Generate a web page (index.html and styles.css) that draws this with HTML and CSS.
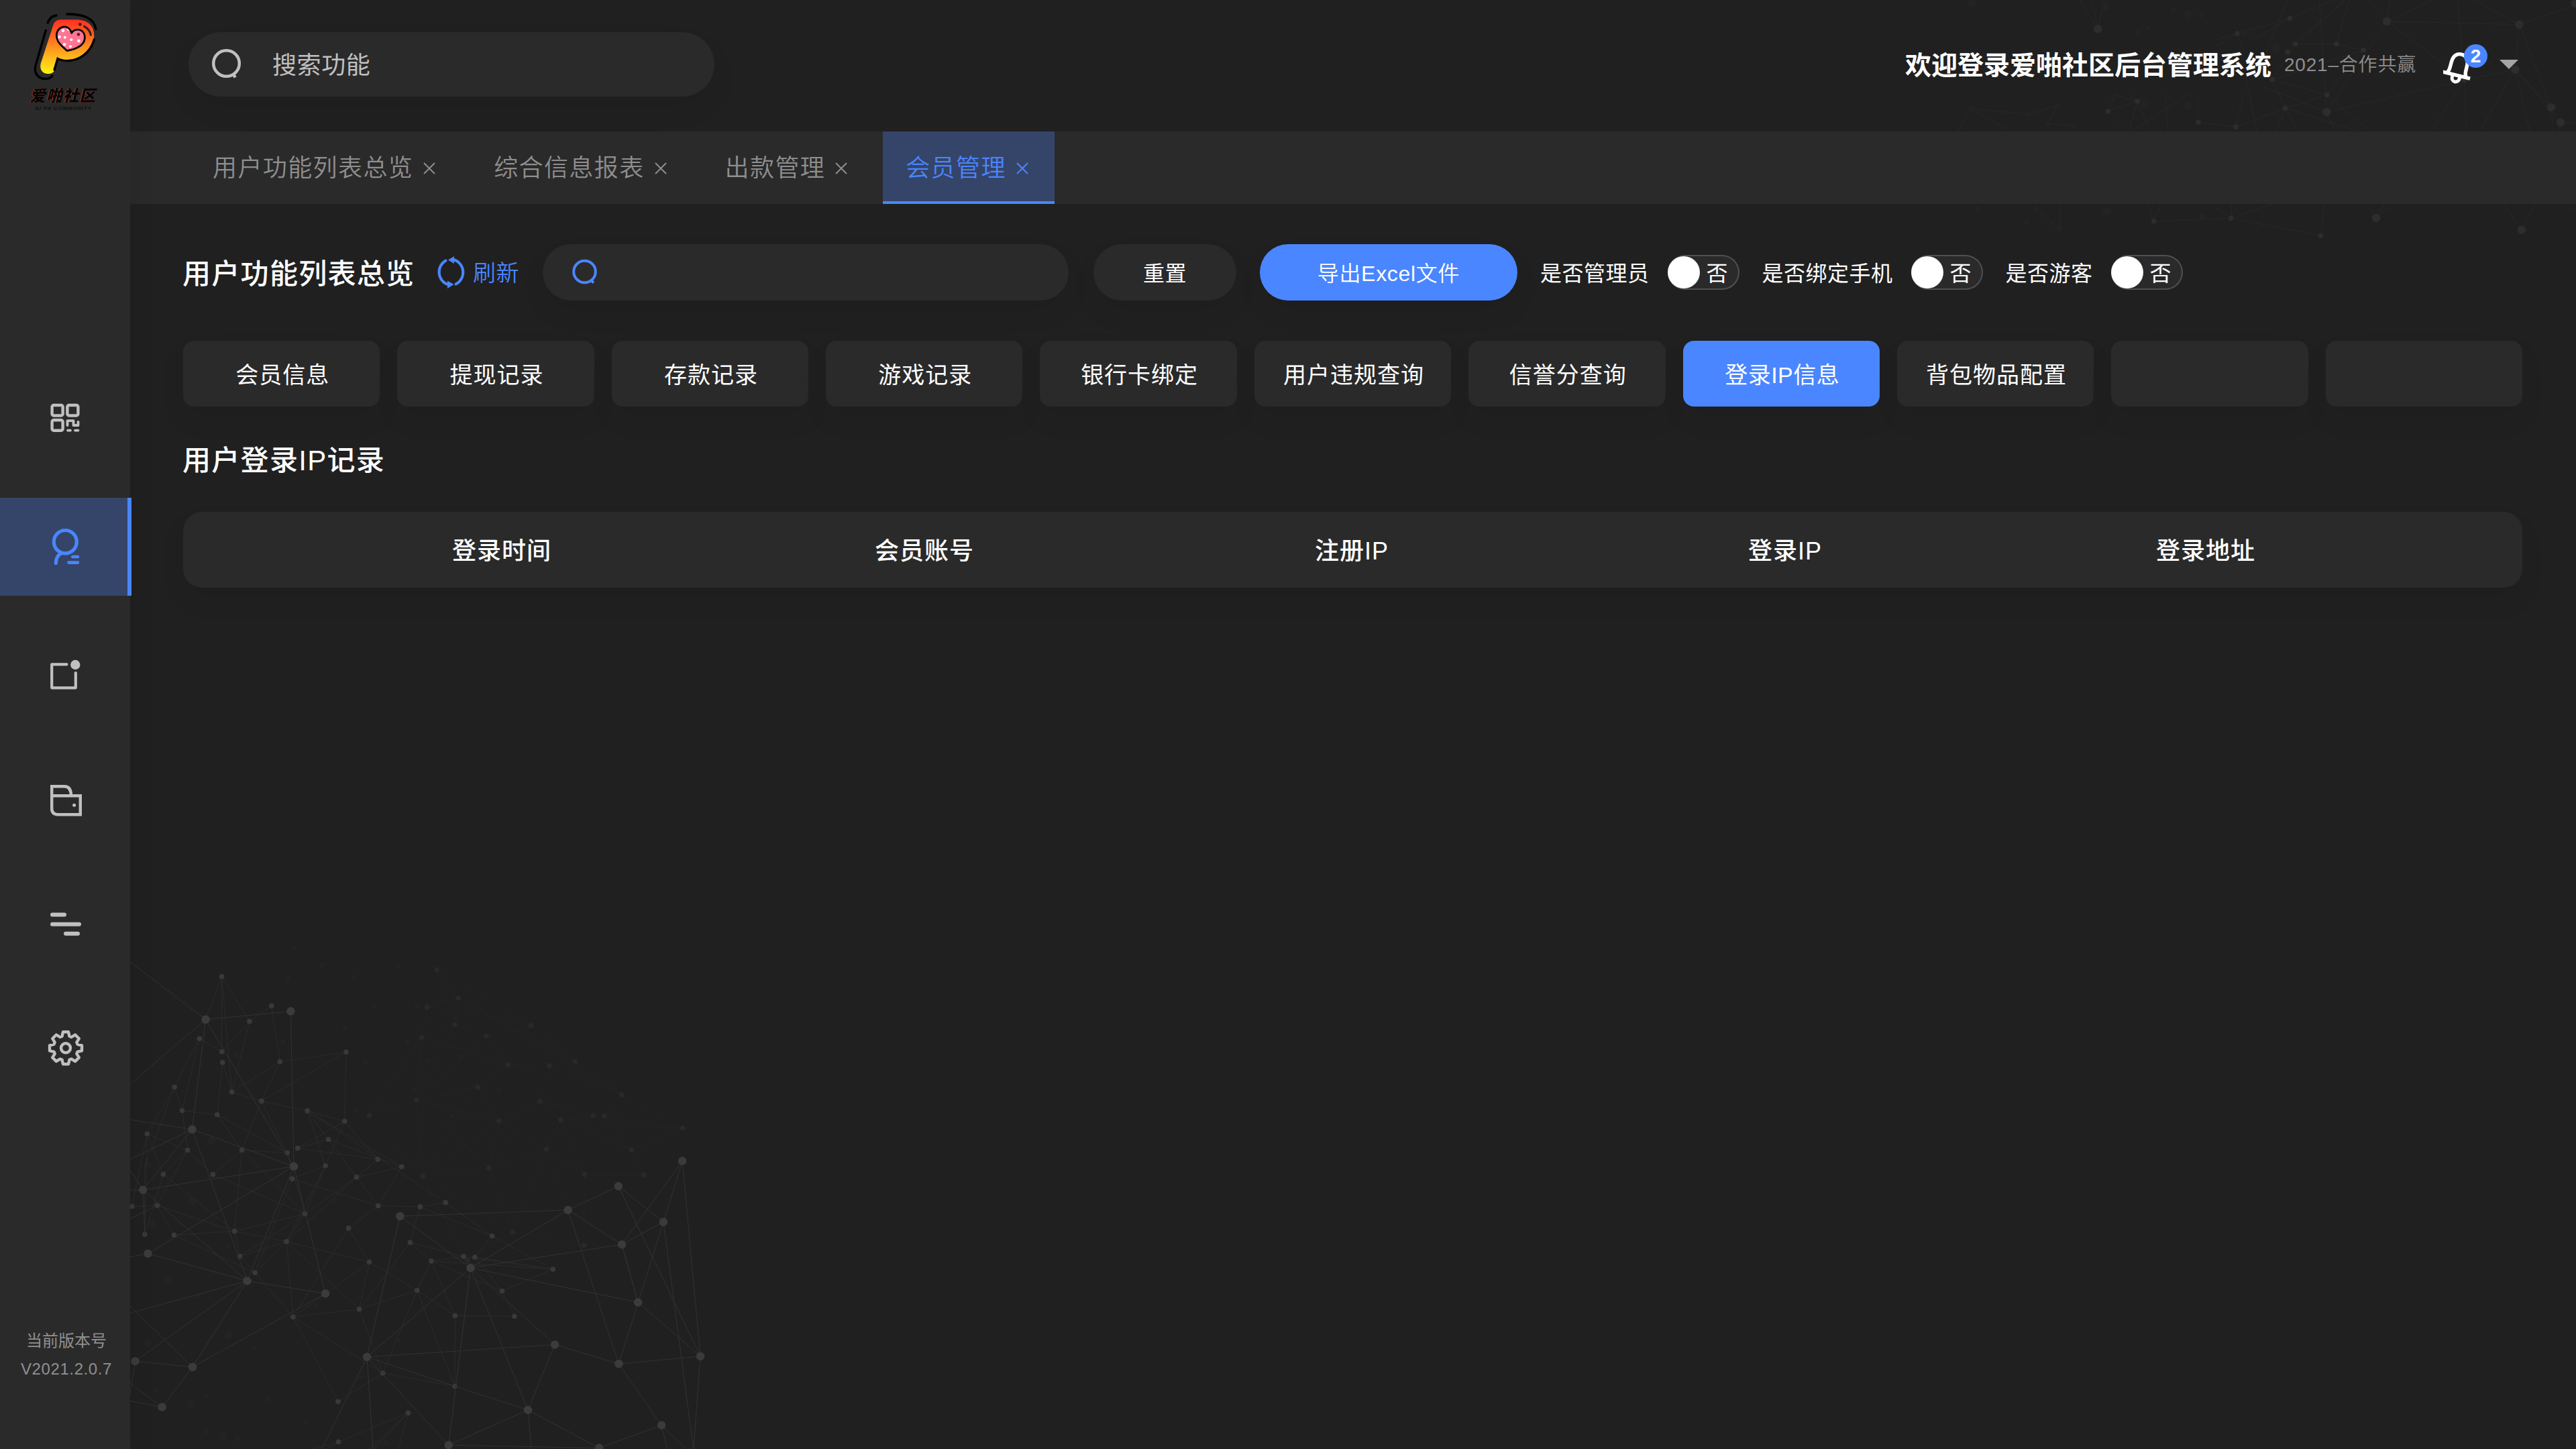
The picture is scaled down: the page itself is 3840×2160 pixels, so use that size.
FILE: index.html
```html
<!DOCTYPE html>
<html lang="zh-CN">
<head>
<meta charset="utf-8">
<title>爱啪社区后台管理系统</title>
<link rel="stylesheet" href="styles.css">
</head>
<body>
<div class="app">
  <svg class="mesh mesh-bottom" viewBox="0 0 1568 1568" preserveAspectRatio="none">
    <g class="mesh-faint">
      <path class="link" d="M803 94L859 181L778 209L764 302L850 263L859 181L850 263L803 94L1048 265L778 209M859 181L1162 376L1048 265L932 298L850 263M1048 265L988 386L932 298L750 495L850 263M764 302L988 386L1096 389L1162 376L1284 479L1096 389L1071 499L965 559L750 495L764 302L628 542L750 495L910 455L988 386M910 455L965 559L939 704L750 495L767 729L628 542M910 455L767 729L965 559L1088 646L1125 556L1071 499L1209 542L1442 581L1125 556L1238 544L1284 479L1442 581L1309 648L1125 556L1187 724L1341 725L1309 648L1238 544M1071 499L939 704L767 729L1000 901L939 704L1088 646L1187 724L1186 942L1000 901L1088 646L1144 833M767 729L880 990L1000 901M859 181L1284 479"/>
      <path class="dot small" d="M803 94h.1M859 181h.1M778 209h.1M850 263h.1M764 302h.1M932 298h.1M1048 265h.1M988 386h.1M1096 389h.1M1162 376h.1M910 455h.1M750 495h.1M628 542h.1M1071 499h.1M1284 479h.1M965 559h.1M1125 556h.1M1209 542h.1M1238 544h.1M1442 581h.1M1088 646h.1M1309 648h.1M939 704h.1M767 729h.1M1187 724h.1M1341 725h.1M1000 901h.1M1186 942h.1M883 988h.1"/>
    </g>
    <g class="mesh-ghost">
      <path class="dot large" d="M219 620h.1M53 695h.1M168 805h.1M62 874h.1M104 1052h.1M263 1218h.1M53 1241h.1M164 1430h.1M249 1530h.1"/>
      <path class="dot small" d="M434 28h.1M505 80h.1M703 84h.1M587 116h.1M418 122h.1M642 205h.1M752 206h.1M565 274h.1M404 315h.1M726 318h.1M284 358h.1M618 378h.1M781 375h.1M866 360h.1M594 523h.1M743 466h.1M965 466h.1M842 544h.1M538 806h.1M260 942h.1M182 1097h.1M488 1130h.1M328 1258h.1M73 1386h.1M206 1403h.1M364 1415h.1M462 1484h.1M605 1348h.1M207 1515h.1M285 1537h.1M671 1549h.1M705 1234h.1"/>
    </g>
    <g class="mesh-mid">
      <path class="link" d="M245 115L203 247M245 115L317 253L245 346L187 306L122 455L142 527L187 306M245 115L245 346M245 115L271 470L317 253L374 205L396 377L568 347L564 560L442 643L522 616L467 528L564 560L650 677L442 643M247 379L271 470L396 377L348 498L568 347M247 379L233 540L142 527L156 649L51 599L93 723L156 649L222 724L297 649L233 540L415 657L348 498L271 470M348 498L467 528L712 700L522 616L595 732L650 677M348 498L297 649L415 657M467 528L514 697L564 560M467 528L826 810L760 823L651 820L712 700L595 732L461 845L514 697L428 737L651 820L595 732L413 930L461 845L222 724M514 697L413 930L278 898L297 649L461 845L278 898L121 910L77 819L278 898L93 723L45 908L51 599L12 822L77 819L156 649M122 455L45 700L45 908M122 455L51 599M12 822L77 819M121 910L331 1026L292 975L461 845M292 975L413 930L331 1026L430 1162L413 930L628 993L574 889L651 820M574 889L430 1162L602 1138L413 930M628 993L430 1162M628 993L602 1138L752 1080L628 993M602 1138L734 933L760 823L947 913L826 810M734 933L873 976L789 990L734 933M789 990L752 1080L851 1158L1005 1160L973 1082L902 978L947 913L1105 1015L902 978M873 976L1105 1015L973 1082L789 990L851 1158L850 1375L663 1335L752 1080L850 1375M789 990L1105 1015M602 1138L663 1335L430 1162L547 1422L663 1335M415 657L461 845M428 737L331 1026M278 898L292 975M548 1546L729 1457L640 1568M729 1457L703 1568M548 1546L480 1568M548 1546L520 1568M729 1457L628 1568"/>
      <path class="dot small" d="M245 115h.1M374 205h.1M317 253h.1M187 306h.1M245 346h.1M247 379h.1M396 377h.1M568 347h.1M122 455h.1M271 470h.1M348 498h.1M467 528h.1M142 527h.1M233 540h.1M564 560h.1M51 599h.1M156 649h.1M297 649h.1M415 657h.1M442 643h.1M522 616h.1M650 677h.1M514 697h.1M712 700h.1M595 732h.1M428 737h.1M222 724h.1M93 723h.1M12 822h.1M77 819h.1M461 845h.1M651 820h.1M760 823h.1M826 810h.1M278 898h.1M574 889h.1M45 908h.1M121 910h.1M413 930h.1M292 975h.1M331 1026h.1M628 993h.1M734 933h.1M789 990h.1M873 976h.1M902 978h.1M947 913h.1M1105 1015h.1M973 1082h.1M752 1080h.1M602 1138h.1M430 1162h.1M851 1158h.1M1005 1160h.1M663 1335h.1M850 1375h.1M547 1422h.1M729 1457h.1M548 1546h.1"/>
    </g>
    <g class="mesh-strong">
      <path class="link" d="M7 70L203 247L424 222L432 699L40 771L7 710M203 247L7 446M203 247L168 585L7 555M203 247L432 699L168 585L7 677M168 585L40 771L311 1051L168 585M432 699L53 967L7 977M432 699L514 1090L311 1051L53 967M432 699L311 1051L7 1150M40 771L7 771M40 771L45 908M311 1051L20 1298L169 1316L311 1051M514 1090L169 1316L90 1439L7 1420M169 1316L7 1128M20 1298L7 1400M90 1439L7 1365M7 860L77 819M708 852L1144 833L1275 760L1392 870L1284 939L1144 833L891 1011L708 852L622 1285L891 1011L1284 939L1326 1117L891 1011L1110 1247L622 1285L850 1375L1040 1448L891 1011L834 1556L622 1285L505 1568M622 1285L638 1568M1441 682L1284 939M1441 682L1392 870L1276 1306L1144 833M1441 682L1488 1283L1326 1117M1284 939L1326 1117M1392 870L1470 1568L1488 1283L1276 1306L1110 1247L1040 1448L834 1556L1225 1565L1040 1448L1049 1568M1275 760L1488 1283M1276 1306L1387 1495L1225 1565M1387 1495L1402 1568M1387 1495L1450 1568"/>
      <path class="dot large" d="M424 222h.1M203 247h.1M168 585h.1M40 771h.1M432 699h.1M53 967h.1M311 1051h.1M514 1090h.1M20 1298h.1M169 1316h.1M90 1439h.1M708 852h.1M891 1011h.1M622 1285h.1M1144 833h.1M1275 760h.1M1441 682h.1M1392 870h.1M1284 939h.1M1326 1117h.1M1110 1247h.1M1276 1306h.1M1488 1283h.1M1040 1448h.1M834 1556h.1M1225 1565h.1M1387 1495h.1"/>
    </g>
  </svg>
  <svg class="mesh mesh-top" viewBox="0 0 1568 1200" preserveAspectRatio="none">
    <g class="mesh-faint">
      <path class="link" d="M475 0L514 130L500 0M514 130L527 0M937 82L821 150L768 182M937 82L855 177M821 150L775 205M821 150L835 230M937 82L1035 0M932 0L885 230M1002 0L1018 501M1058 0L949 197L1040 197L1099 224M1040 197L1068 0M949 197L1060 0M1108 0L1151 95L1157 0M1151 95L1443 110L1568 20M1151 95L1255 0M1151 95L1322 358L1307 0M1345 0L1443 110L1513 480L1434 311L1443 110M1151 95L1018 501M1099 224L898 356L949 197M898 356L1019 424L1099 224M898 356L927 484L1019 424L1115 588M1018 501L878 386M1018 501L1322 358L1434 311L1355 588M1322 358L1248 588M1322 358L1326 588M1434 311L1466 588M1434 311L1534 548L1568 551M1513 480L1519 588M1534 548L1529 588M927 484L818 568L735 546L735 420M927 484L907 588M927 484L955 588M927 484L1090 588M818 568L835 420M1018 501L1037 588M601 453L580 420M601 453L550 425M601 453L625 425M601 453L536 498L550 430M601 453L630 588M536 498L578 588M601 453L582 588M714 418L588 588M663 420L668 588M835 300L865 588M234 486L362 512L424 470L404 553L460 563M234 486L320 588M234 486L205 588M625 912L637 989L652 912M637 989L807 976L760 912M807 976L809 912M807 976L827 912M807 976L898 912M807 976L1005 1054L1013 912M1112 912L1127 975L1145 912M1127 975L1170 912M1408 912L1448 1028L1478 912M1545 912L1568 942M377 933L429 1024L430 912"/>
      <path class="dot small" d="M937 82h.1M821 150h.1M949 197h.1M1040 197h.1M1099 224h.1M932 233h.1M898 356h.1M1019 424h.1M927 484h.1M601 453h.1M536 498h.1M735 546h.1M818 568h.1M637 989h.1M807 976h.1M1005 1054h.1"/>
      <path class="dot large" d="M514 130h.1M1151 95h.1M1443 110h.1M1322 350h.1M1434 311h.1M1018 501h.1M1513 480h.1M1534 548h.1M1127 975h.1M1448 1028h.1M1566 16h.1"/>
    </g>
    <g class="mesh-ghost">
      <path class="dot small" d="M234 486h.1M362 512h.1M424 470h.1M404 553h.1M460 563h.1M247 933h.1M377 933h.1M356 990h.1M429 1024h.1M680 42h.1M740 70h.1M624 124h.1M602 145h.1M838 152h.1"/>
      <path class="dot large" d="M236 12h.1M530 28h.1M713 62h.1M618 464h.1M713 476h.1M533 945h.1M744 970h.1M907 215h.1"/>
    </g>
  </svg>

  <aside class="sidebar">
    <svg class="logo" viewBox="0 0 582 600">
      <defs>
        <linearGradient id="flame" x1="0" y1="0" x2="0" y2="1">
          <stop offset="0" stop-color="#ff2f22"/><stop offset=".4" stop-color="#ff7a20"/><stop offset=".7" stop-color="#ffb91c"/><stop offset="1" stop-color="#fff213"/>
        </linearGradient>
        <clipPath id="heart"><path d="M300 225C275 203 256 188 256 158C256 118 305 108 320 145C337 122 380 135 377 172C374 205 330 222 300 225Z"/></clipPath>
      </defs>
      <path fill="url(#flame)" d="M238 112Q245 89 270 88H345C395 90 422 118 421 160C420 215 365 268 300 267Q262 266 256 270L242 318Q232 332 212 330C190 328 176 310 182 284Z"/>
      <g fill="none" stroke="#000" stroke-width="10" stroke-linecap="round">
        <path d="M214 102Q223 73 252 69M300 63C370 63 420 78 429 130M205 136L160 290C148 330 175 353 203 353Q226 352 234 338M421 177C405 235 355 272 300 272Q270 270 258 262L243 312"/>
      </g>
      <path fill="#ff7593" d="M300 225C275 203 256 188 256 158C256 118 305 108 320 145C337 122 380 135 377 172C374 205 330 222 300 225Z"/>
      <g clip-path="url(#heart)" fill="#fff">
        <path d="M252 150Q262 200 310 230L280 230L250 190Z"/>
        <circle cx="282" cy="137" r="7"/><circle cx="306" cy="131" r="7"/><circle cx="266" cy="165" r="7"/><circle cx="290" cy="167" r="6"/><circle cx="319" cy="178" r="6"/><circle cx="352" cy="183" r="7"/><circle cx="315" cy="208" r="6"/><circle cx="288" cy="199" r="7"/>
      </g>
      <path fill="none" stroke="#000" stroke-width="8" stroke-linejoin="round" d="M300 227C275 205 253 188 253 158C253 115 308 104 320 148C334 120 382 130 379 172C376 207 330 222 300 227Z"/>
      <g fill="none" stroke="#3a2020" stroke-linecap="round"><path stroke-width="10" d="M377 118Q402 132 406 156"/></g>
      <circle cx="358" cy="109" r="7" fill="#4a1a18"/><circle cx="351" cy="154" r="7" fill="#5a2030"/>
      <g class="logo-name"><text class="logo-name-glow" x="130" y="454" textLength="292">爱啪社区</text><text x="133" y="452" textLength="292">爱啪社区</text></g>
      <text class="logo-latin" x="156" y="492" textLength="252">AI PA COMMUNITY</text>
    </svg>
    <nav class="nav">
      <a class="nav-item"><svg viewBox="0 554 194 146"><g class="stroke" stroke-width="4.4"><rect x="77.6" y="604" width="16" height="15.5" rx="2.5"/><rect x="100.4" y="604" width="16" height="15.5" rx="2.5"/><rect x="77.6" y="626.3" width="16" height="15.5" rx="2.5"/><path stroke-linecap="round" stroke-linejoin="round" stroke-width="3.8" d="M100.5 634V627.2H109.5V634H116.5V629M101 641.6H105M112 641.6H116.5"/></g></svg></a>
      <a class="nav-item active"><svg viewBox="0 742 194 146"><g class="stroke" stroke-width="5.2" stroke-linecap="round"><ellipse cx="97.3" cy="807.7" rx="17" ry="17.2"/><path d="M91 825Q83.5 829 83.3 839.5"/><path stroke-width="4.600" d="M108.3 830H116M102.5 838.6H116"/></g></svg></a>
      <a class="nav-item"><svg viewBox="0 930 194 146"><g class="stroke" stroke-width="4.2" stroke-linecap="round" stroke-linejoin="round"><path d="M99.5 990.3H77.2V1025.3H112.8V1003"/></g><circle class="fill" cx="112.3" cy="991" r="7.2"/></svg></a>
      <a class="nav-item"><svg viewBox="0 1118 194 146"><g class="stroke" stroke-width="4.4"><path d="M77.2 1186.2H119.8V1214.2H86Q77.2 1214 77.2 1205V1172.3H96Q106 1172.5 106 1186"/></g><circle class="fill" cx="110.6" cy="1200.3" r="2.5"/></svg></a>
      <a class="nav-item"><svg viewBox="0 1306 194 146"><g class="stroke" stroke-width="6" stroke-linecap="round"><path d="M78 1363.6H96M78 1377.7H118M98 1391.7H116"/></g></svg></a>
      <a class="nav-item"><svg viewBox="0 1494 194 146"><g class="stroke" stroke-width="4.4" stroke-linejoin="round" transform="translate(98 1562.3)"><circle r="7"/><path d="M-5.5-17.5L-4-24H4L5.5-17.5L8.5-16.3L14.1-19.8L19.8-14.1L16.3-8.5L17.5-5.5L24-4V4L17.5 5.5L16.3 8.5L19.8 14.1L14.1 19.8L8.5 16.3L5.5 17.5L4 24H-4L-5.5 17.5L-8.5 16.3L-14.1 19.8L-19.8 14.1L-16.3 8.5L-17.5 5.5L-24 4V-4L-17.5-5.5L-16.3-8.5L-19.8-14.1L-14.1-19.8L-8.5-16.3Z"/></g></svg></a>
    </nav>
    <div class="version"><span>当前版本号</span><span class="version-number">V2021.2.0.7</span></div>
  </aside>

  <div class="page">
    <header class="header">
      <label class="global-search">
        <svg width="46" height="48" viewBox="0 0 46 48"><circle cx="23.500" cy="22.500" r="19.300"/><path d="M33.500 37L36.500 43.500"/></svg>
        <span>搜索功能</span>
      </label>
      <div class="account">
        <strong class="welcome">欢迎登录爱啪社区后台管理系统</strong>
        <span class="slogan">2021–合作共赢</span>
        <div class="bell">
          <svg width="46" height="54" viewBox="0 0 46 54"><g fill="none" stroke="#fff" stroke-width="5.4" transform="rotate(14 23 26)"><path d="M2 39.5H44"/><path d="M8.5 39C11 35 11 32 11 23C11 12 16 7.500 23 7.500S35 12 35 23C35 32 35 35 37.500 39"/><path stroke-width="5" d="M17.500 41V44A5.500 5.500 0 0 0 28.500 44V41"/></g></svg>
          <span class="badge">2</span>
        </div>
        <i class="caret"></i>
      </div>
    </header>

    <div class="tabs">
      <a class="tab"><span>用户功能列表总览</span><svg class="close" viewBox="0 0 18 18"><path d="M1 1L17 17M17 1L1 17"/></svg></a>
      <a class="tab"><span>综合信息报表</span><svg class="close" viewBox="0 0 18 18"><path d="M1 1L17 17M17 1L1 17"/></svg></a>
      <a class="tab"><span>出款管理</span><svg class="close" viewBox="0 0 18 18"><path d="M1 1L17 17M17 1L1 17"/></svg></a>
      <a class="tab active"><span>会员管理</span><svg class="close" viewBox="0 0 18 18"><path d="M1 1L17 17M17 1L1 17"/></svg></a>
    </div>

    <main class="content">
      <div class="toolbar">
        <h1 class="title">用户功能列表总览</h1>
        <a class="refresh">
          <svg width="42" height="48" viewBox="0 0 42 48"><g fill="none" stroke="currentColor" stroke-width="4" stroke-linecap="round"><path d="M13.500 6.500A19 19.500 0 0 0 17 42.300"/><path d="M25 5A19 19.500 0 0 1 28.500 41.500"/></g><path fill="currentColor" d="M17 5.500L26 0V11Z"/><path fill="currentColor" d="M25.500 42L16 36.500V48Z"/></svg>
          <span>刷新</span>
        </a>
        <label class="filter-search"><svg width="40" height="40" viewBox="0 0 40 40"><circle cx="18.500" cy="19" r="16.300"/><path d="M27.500 31.500L32 35.500"/></svg></label>
        <button class="btn reset">重置</button>
        <button class="btn export">导出Excel文件</button>
        <div class="option"><span>是否管理员</span><span class="toggle"><i></i><b>否</b></span></div>
        <div class="option"><span>是否绑定手机</span><span class="toggle"><i></i><b>否</b></span></div>
        <div class="option"><span>是否游客</span><span class="toggle"><i></i><b>否</b></span></div>
      </div>

      <div class="sections">
        <a class="section">会员信息</a>
        <a class="section">提现记录</a>
        <a class="section">存款记录</a>
        <a class="section">游戏记录</a>
        <a class="section">银行卡绑定</a>
        <a class="section">用户违规查询</a>
        <a class="section">信誉分查询</a>
        <a class="section active">登录IP信息</a>
        <a class="section">背包物品配置</a>
        <a class="section"></a>
        <a class="section"></a>
      </div>

      <h2 class="subtitle">用户登录IP记录</h2>
      <div class="table-head">
        <span>登录时间</span><span>会员账号</span><span>注册IP</span><span>登录IP</span><span>登录地址</span>
      </div>
    </main>
  </div>
</div>
</body>
</html>
```
FILE: styles.css
```css
:root {
  --bg: #202020;
  --panel: #2a2a2a;
  --blue: #4a86ff;
  --shadow: 0 20px 40px rgba(0, 0, 0, .06);
}

* { box-sizing: border-box; }

body {
  margin: 0;
  background: var(--bg);
  color: #fff;
  font-family: "Liberation Sans", "Noto Sans CJK SC", sans-serif;
}

.app {
  position: relative;
  display: flex;
  width: 3840px;
  height: 2160px;
  overflow: hidden;
}

/* decorative node mesh behind the page */
.mesh { position: absolute; }
.mesh-bottom { left: 190px; bottom: 0; width: 900px; height: 760px; }
.mesh-top { right: 0; top: 0; width: 1060px; height: 400px; }
.mesh path { fill: none; vector-effect: non-scaling-stroke; stroke-linecap: round; }
.mesh .link { stroke-width: 1px; }
.mesh .dot.small { stroke-width: 7.600px; }
.mesh .dot.large { stroke-width: 12.500px; }
.mesh-strong .link { stroke: #323232; }
.mesh-strong .dot { stroke: #3b3b3b; }
.mesh-mid .link { stroke: #2b2b2b; }
.mesh-mid .dot { stroke: #393939; }
.mesh-faint .link { stroke: #242424; }
.mesh-faint .dot { stroke: #292929; }
.mesh-top .mesh-faint .link { stroke: #282828; }
.mesh-top .mesh-faint .dot { stroke: #2d2d2d; }
.mesh-ghost .dot { stroke: #232323; }

.sidebar {
  position: relative;
  z-index: 1;
  display: flex;
  flex-direction: column;
  flex: none;
  width: 194px;
  background: var(--panel);
  box-shadow: 10px 0 30px rgba(0, 0, 0, .06);
}
.logo { width: 194px; height: 200px; }
.logo-name {
  font: italic 900 70px "Noto Sans CJK SC", sans-serif;
  fill: #050505;
}
.logo-name-glow { fill: #a8402c; }
.logo-latin { font: italic bold 24px "Liberation Sans", sans-serif; fill: #101010; }

.nav { display: flex; flex-direction: column; gap: 42px; margin-top: 354px; }
.nav-item { height: 146px; color: #c0c0c0; }
.nav-item svg { display: block; width: 194px; height: 146px; }
.nav-item.active {
  width: 196px;
  color: var(--blue);
  background: #354569;
  border-right: 6px solid var(--blue);
}
.stroke { fill: none; stroke: currentColor; }
.fill { fill: currentColor; }

.version {
  display: flex;
  flex-direction: column;
  align-items: center;
  margin-top: auto;
  padding: 0 0 98px 4px;
  color: #909090;
  font-size: 24px;
  line-height: 42px;
}
.version-number { letter-spacing: .600px; }

.page { position: relative; flex: 1; display: flex; flex-direction: column; }

.header {
  display: flex;
  justify-content: space-between;
  align-items: center;
  height: 196px;
  padding: 0 86px 4px 87px;
}
.global-search {
  display: flex;
  align-items: center;
  gap: 46px;
  width: 784px;
  height: 96px;
  padding-left: 33px;
  border-radius: 48px;
  background: var(--panel);
  box-shadow: var(--shadow);
  color: #c0c0c0;
  font-size: 36px;
  letter-spacing: .600px;
}
.global-search span { padding-bottom: 4px; }
.global-search svg { fill: none; stroke: #c0c0c0; stroke-width: 4.500px; }
.account { display: flex; align-items: center; }
.welcome { padding-bottom: 4px; font-size: 39px; }
.slogan {
  margin-left: 19px;
  padding-bottom: 4px;
  color: #8f8f8f;
  font-size: 28px;
  font-weight: 350;
  letter-spacing: .800px;
}
.bell { position: relative; width: 46px; height: 54px; margin: 8px -2px 0 40px; }
.badge {
  position: absolute;
  left: 31px;
  top: -7px;
  width: 35px;
  height: 35px;
  border-radius: 50%;
  background: var(--blue);
  text-align: center;
  font: bold 28px/35px "Liberation Sans", sans-serif;
}
.caret {
  margin-left: 40px;
  border: 14px solid transparent;
  border-top-color: #a5a5a5;
  border-bottom: 0;
}

.tabs {
  display: flex;
  gap: 14px;
  height: 108px;
  padding-left: 89px;
  background: var(--panel);
}
.tab {
  display: flex;
  align-items: center;
  padding: 0 39px 2px 34px;
  color: #8f8f8f;
  font-size: 36px;
  font-weight: 350;
  letter-spacing: 1.400px;
}
.tab span { padding-bottom: 4px; }
.close {
  width: 18px;
  height: 18px;
  margin: 4px 0 0 15px;
  fill: none;
  stroke: currentColor;
  stroke-width: 2px;
}
.tab.active {
  color: var(--blue);
  background: #354569;
  box-shadow: inset 0 -4px var(--blue);
}

.content { padding: 60px 80px 0 78px; }
.toolbar { display: flex; align-items: center; height: 84px; }
.title {
  width: 379px;
  margin: 0;
  padding-bottom: 4px;
  font-size: 42px;
  font-weight: 500;
  letter-spacing: 1.300px;
}
.refresh {
  display: flex;
  align-items: center;
  gap: 12px;
  width: 158px;
  color: var(--blue);
  font-size: 34px;
  font-weight: 350;
  letter-spacing: .500px;
}
.refresh span { padding-bottom: 3px; }
.filter-search {
  display: flex;
  align-items: center;
  width: 784px;
  height: 84px;
  padding-left: 44px;
  border-radius: 42px;
  background: var(--panel);
  box-shadow: var(--shadow);
}
.filter-search svg { fill: none; stroke: var(--blue); stroke-width: 4px; }
.btn {
  height: 84px;
  border: 0;
  border-radius: 42px;
  padding: 0 0 3px;
  background: var(--panel);
  box-shadow: var(--shadow);
  color: #fff;
  font: 32px "Liberation Sans", "Noto Sans CJK SC", sans-serif;
  letter-spacing: .500px;
}
.reset { width: 213px; margin: 0 35px 0 37px; }
.export { width: 384px; background: var(--blue); font-weight: 350; letter-spacing: .700px; }
.option {
  display: flex;
  align-items: center;
  gap: 27px;
  margin-left: 34px;
  font-size: 32px;
  letter-spacing: .500px;
}
.option > span:first-child { padding-bottom: 3px; }
.toggle {
  display: flex;
  align-items: center;
  gap: 10px;
  width: 107px;
  height: 52px;
  border: 2px solid #505050;
  border-left-width: 0;
  border-radius: 26px;
  background: var(--panel);
}
.toggle i { width: 48px; height: 48px; border-radius: 50%; background: #fff; }
.toggle b { padding-bottom: 3px; font-weight: 400; }

.sections {
  display: grid;
  grid-template-columns: repeat(11, 1fr);
  gap: 26px;
  margin: 60px 0 0 1px;
}
.section {
  display: flex;
  align-items: center;
  justify-content: center;
  height: 98px;
  padding: 0 0 1px 3px;
  border-radius: 16px;
  background: var(--panel);
  box-shadow: var(--shadow);
  font-size: 34px;
  letter-spacing: 1px;
}
.section.active { background: var(--blue); letter-spacing: .500px; }

.subtitle {
  margin: 48px 0 0;
  font-size: 42px;
  font-weight: 500;
  line-height: 66px;
  letter-spacing: 1.300px;
}
.table-head {
  display: grid;
  grid-template-columns: 620px 640px 634px 658px 596px;
  align-items: center;
  height: 113px;
  margin: 43px 0 0 1px;
  padding: 0 0 4px 165px;
  border-radius: 28px;
  background: var(--panel);
  box-shadow: var(--shadow);
  font-size: 36px;
  font-weight: 500;
  letter-spacing: 1px;
  text-align: center;
}
```
